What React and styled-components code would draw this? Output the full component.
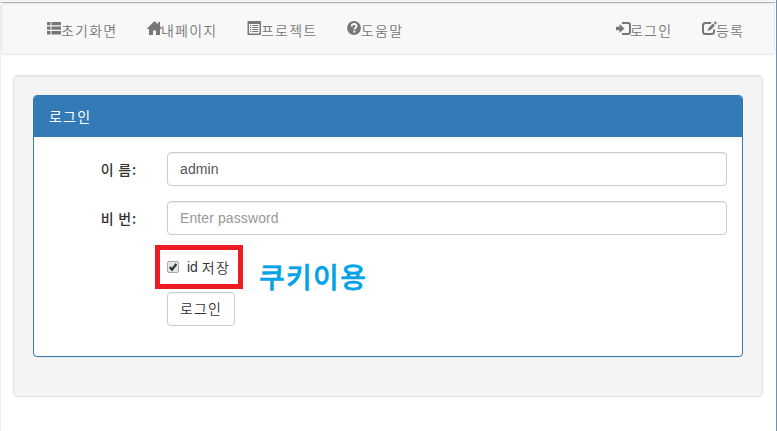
import React from "react";
import styled, { createGlobalStyle } from "styled-components";

const GlobalStyle = createGlobalStyle`
  *, *::before, *::after { box-sizing: border-box; }
  html, body { margin: 0; padding: 0; }
  body {
    font-family: "Liberation Sans", "Noto Sans CJK KR", sans-serif;
    font-size: 14px;
    line-height: 20px;
    color: #333;
    background: #fff;
    overflow: hidden;
  }
`;

const Page = styled.div`
  height: 431px;
  border-left: 1px solid #f0f0f0;
  border-right: 1px solid #6f8fb0;
  padding-right: 1px;
`;

const WindowEdge = styled.div`
  height: 3px;
  background: #f4f4f4;
  border-bottom: 1px solid #b4b4b4;
`;

const Navbar = styled.nav`
  height: 52px;
  display: flex;
  justify-content: space-between;
  padding: 0 15px 0 30px;
  background: #f8f8f8;
  border: 1px solid #e7e7e7;
  border-radius: 4px;
`;

const NavList = styled.ul`
  display: flex;
  margin: 0;
  padding: 0;
  list-style: none;
`;

const NavItem = styled.li`
  display: flex;
  padding: 15px 15px 0;
  color: #777;
  width: ${(p) => p.$width}px;
  white-space: nowrap;
`;

const NavText = styled.span`
  padding-top: 1px;
  font: 350 14px/20px "Noto Sans CJK KR", sans-serif;
  letter-spacing: 1.2px;
`;

const Icon = styled.svg`
  flex: none;
  width: 14px;
  height: 14px;
  margin-top: 2px;
  overflow: visible;
`;

const Korean = styled.span`
  font-family: "Noto Sans CJK KR", sans-serif;
  font-size: 14px;
  line-height: 20px;
  font-weight: ${(p) => p.$weight || 350};
  letter-spacing: ${(p) => p.$spacing ?? 1.2}px;
`;

const Well = styled.main`
  width: 750px;
  height: 322px;
  margin: 20px 0 0 12px;
  padding: 19px;
  background: #f4f4f4;
  border: 1px solid #e3e3e3;
  border-radius: 4px;
  box-shadow: inset 0 1px 1px rgba(0, 0, 0, 0.05);
`;

const Panel = styled.section`
  height: 262px;
  background: #fff;
  border: 1px solid #337ab7;
  border-radius: 4px;
  box-shadow: 0 1px 1px rgba(0, 0, 0, 0.05);
`;

const PanelHeading = styled.header`
  height: 41px;
  padding: 10px 15px;
  color: #fff;
  background: #337ab7;
  border-radius: 3px 3px 0 0;
`;

const Form = styled.form`
  display: grid;
  grid-template-columns: 103px 560px;
  column-gap: 30px;
  row-gap: 15px;
  padding: 15px 15px 0 0;
`;

const Label = styled.label`
  padding-top: 7px;
  text-align: right;
`;

const Input = styled.input`
  width: 100%;
  height: 34px;
  padding: 6px 12px;
  font: 14px/20px "Liberation Sans", sans-serif;
  letter-spacing: 0.1px;
  color: #555;
  background: #fff;
  border: 1px solid #ccc;
  border-radius: 4px;
  box-shadow: inset 0 1px 1px rgba(0, 0, 0, 0.075);
  outline: none;
  &::placeholder { color: #999; opacity: 1; }
`;

const Actions = styled.div`
  grid-column: 2;
  margin-top: -5px;
`;

const RememberRow = styled.div`
  display: flex;
  height: 44px;
  margin-left: -12px;
`;

const RememberBox = styled.label`
  display: flex;
  align-items: flex-start;
  width: 88px;
  height: 44px;
  padding: 7px 0 0 7px;
  border: 5px solid #ed1c24;
  white-space: pre;
`;

const Checkbox = styled.svg`
  flex: none;
  width: 12px;
  height: 12px;
  margin: 4px 8px 0 0;
`;

const Note = styled.strong`
  margin: 11px 0 0 16px;
  font: 500 28px/40px "Noto Sans CJK KR", sans-serif;
  letter-spacing: 1.3px;
  color: #00a2e8;
  -webkit-text-stroke: 0.5px #00a2e8;
`;

const Button = styled.button`
  display: block;
  width: 68px;
  height: 34px;
  margin-top: 3px;
  padding: 5px 0 7px;
  color: #333;
  background: #fff;
  border: 1px solid #ccc;
  border-radius: 4px;
`;

const ListIcon = () => (
  <Icon viewBox="0 0 14 14" fill="currentColor">
    <path d="M0 1h3.500v3.200H0zM4.500 1H14v3.200H4.500zM0 5.500h3.500v3.200H0zM4.500 5.500H14v3.200H4.500zM0 10h3.500v3.500H0zM4.500 10H14v3.500H4.500z" />
  </Icon>
);

const HomeIcon = () => (
  <Icon viewBox="0 0 14 14" fill="currentColor">
    <path d="M7.500 0 11 3.300V1h2v4.200L15 7.200 14 8h-1v6H9V9.500H6V14H2V8H.4L0 7.400z" />
  </Icon>
);

const ListAltIcon = () => (
  <Icon viewBox="0 0 14 14" fill="currentColor">
    <path fillRule="evenodd" d="M1.500 0h11.500q1 0 1 1v12q0 1-1 1H1.500q-1 0-1-1V1q0-1 1-1zM2 3v9.500h10.500V3z" />
    <path d="M3 4h1.300v1H3zM5.300 4h6v1h-6zM3 6h1.300v1H3zM5.300 6h6v1h-6zM3 8h1.300v1H3zM5.300 8h6v1h-6zM3 10h1.300v1H3zM5.300 10h6v1h-6z" />
  </Icon>
);

const QuestionIcon = () => (
  <Icon viewBox="0 0 14 14">
    <circle cx="7" cy="7" r="6.900" fill="currentColor" />
    <path d="M4.700 5.500C4.700 3.700 5.800 3 7.100 3s2.400.8 2.400 2.100c0 1.600-2 1.700-2 3.500" fill="none" stroke="#f8f8f8" strokeWidth="1.900" />
    <path d="M6.400 9.700h2v1.800h-2z" fill="#f8f8f8" />
  </Icon>
);

const LoginIcon = () => (
  <Icon viewBox="0 0 14 14">
    <path d="M0 5.700h3.500V3L8.500 7.500l-5 4.500V9.300H0z" fill="currentColor" />
    <path d="M6 2h6q2 0 2 2v7q0 2-2 2H6" fill="none" stroke="currentColor" strokeWidth="2" />
  </Icon>
);

const EditIcon = () => (
  <Icon viewBox="0 0 14 14">
    <path d="M9 2H3.500Q1 2 1 4.500v6Q1 13 3.500 13h6Q12 13 12 10.500V8.500" fill="none" stroke="currentColor" strokeWidth="2" />
    <path d="m5.500 10 1-3L11 2.500l2 2L8.500 9zM11.700 1.800l1-1q.6-.6 1.200 0l.6.6q.6.600 0 1.200l-.9.9z" fill="currentColor" />
  </Icon>
);

const leftItems = [
  { label: "초기화면", icon: <ListIcon />, width: 100 },
  { label: "내페이지", icon: <HomeIcon />, width: 100 },
  { label: "프로젝트", icon: <ListAltIcon />, width: 100 },
  { label: "도움말", icon: <QuestionIcon />, width: 86 },
];

const rightItems = [
  { label: "로그인", icon: <LoginIcon />, width: 86 },
  { label: "등록", icon: <EditIcon />, width: 72 },
];

function NavGroup({ items }) {
  return (
    <NavList>
      {items.map((item) => (
        <NavItem key={item.label} $width={item.width}>
          {item.icon}
          <NavText>{item.label}</NavText>
        </NavItem>
      ))}
    </NavList>
  );
}

export default function App() {
  return (
    <>
      <GlobalStyle />
      <Page>
        <WindowEdge />
        <Navbar>
          <NavGroup items={leftItems} />
          <NavGroup items={rightItems} />
        </Navbar>
        <Well>
          <Panel>
            <PanelHeading><Korean $weight={400}>로그인</Korean></PanelHeading>
            <Form onSubmit={(e) => e.preventDefault()}>
              <Label htmlFor="name"><Korean $weight={500} $spacing={0.8}>이 름:</Korean></Label>
              <Input id="name" defaultValue="admin" />
              <Label htmlFor="password"><Korean $weight={500} $spacing={0.8}>비 번:</Korean></Label>
              <Input id="password" type="password" placeholder="Enter password" />
              <Actions>
                <RememberRow>
                  <RememberBox>
                    <Checkbox viewBox="0 0 12 12">
                      <rect x=".5" y=".5" width="11" height="11" rx="1.500" fill="#e4e4e4" stroke="#aaa" />
                      <path d="m2.800 6 2.200 2.700L9.300 3" fill="none" stroke="#333" strokeWidth="2.200" />
                    </Checkbox>
                    id <Korean>저장</Korean>
                  </RememberBox>
                  <Note>쿠키이용</Note>
                </RememberRow>
                <Button type="submit"><Korean>로그인</Korean></Button>
              </Actions>
            </Form>
          </Panel>
        </Well>
      </Page>
    </>
  );
}
